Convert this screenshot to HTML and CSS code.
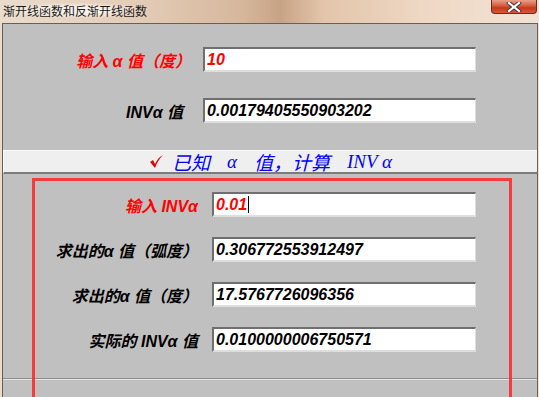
FILE: index.html
```html
<!DOCTYPE html>
<html lang="zh-CN">
<head>
    <meta charset="UTF-8">
    <title>渐开线函数和反渐开线函数</title>
    <link rel="stylesheet" href="styles.css">
</head>
<body>
    <div class="window">
        <div class="titlebar">
            <span class="title">渐开线函数和反渐开线函数</span>
            <div class="close-btn">
                <svg width="16" height="10" viewBox="0 0 16 10">
                    <path d="M3 1 L13 9 M13 1 L3 9" stroke="#3a3a3a" stroke-width="4" stroke-linecap="square"/>
                    <path d="M3 1 L13 9 M13 1 L3 9" stroke="#fff" stroke-width="2.2" stroke-linecap="square"/>
                </svg>
            </div>
        </div>
        <div class="client">
            <div class="top-form">
                <div class="label red">输入 α 值（度）</div>
                <div class="field red">10</div>
                <div class="label short">INVα 值</div>
                <div class="field">0.00179405550903202</div>
            </div>
            <div class="band">
                <svg class="check" width="14" height="13" viewBox="0 0 14 13">
                    <path d="M1 7 L4 5 L6 9 C8 5 10 2 14 0 C11 3 8 7 6 13 Z" fill="#e00000"/>
                </svg>
                <span class="band-text">已知</span>
                <span class="band-text latin">α</span>
                <span class="band-text">值，计算</span>
                <span class="band-text latin">INV α</span>
            </div>
            <div class="lower">
                <div class="lower-form">
                    <div class="label red">输入 INVα</div>
                    <div class="field red">0.01<span class="caret"></span></div>
                    <div class="label">求出的α 值（弧度）</div>
                    <div class="field">0.306772553912497</div>
                    <div class="label">求出的α 值（度）</div>
                    <div class="field">17.5767726096356</div>
                    <div class="label">实际的 INVα 值</div>
                    <div class="field">0.0100000006750571</div>
                </div>
                <div class="highlight"></div>
            </div>
        </div>
    </div>
</body>
</html>
```

FILE: styles.css
```css
body {
    margin: 0;
    padding: 0;
    background: #d9bfa8;
    font-family: "Liberation Sans", "Noto Sans CJK SC", sans-serif;
}
.window {
    width: 539px;
    height: 397px;
    overflow: hidden;
    display: flex;
    flex-direction: column;
    background: linear-gradient(90deg, #eadccd 0%, #e4cdb8 25%, #d6b79c 45%, #c7a386 52%, #e3c5ab 60%, #efd9c6 80%, #f2e2d4 100%);
}
.titlebar {
    height: 23px;
    flex: none;
    display: flex;
    justify-content: space-between;
    align-items: flex-start;
}
.title {
    margin: 3px 0 0 3px;
    font-family: "Noto Sans CJK SC", sans-serif;
    font-size: 12px;
    line-height: 15px;
    color: #1a1a1a;
    background: radial-gradient(ellipse at center, rgba(255, 250, 244, 0.8) 30%, rgba(255, 250, 244, 0) 75%);
}
.close-btn {
    width: 46px;
    height: 14px;
    margin-right: 2px;
    box-sizing: border-box;
    border: 1px solid #6b2a1c;
    border-top: none;
    border-radius: 0 0 4px 4px;
    background: linear-gradient(180deg, #e8a08a 0%, #d65a3c 45%, #c33a1e 60%, #d8583a 100%);
    display: flex;
    justify-content: center;
    align-items: center;
}
.client {
    flex: 1;
    margin: 0 1px 0 2px;
    border: 1px solid #6e5e50;
    border-bottom: none;
    background: #c0c0c0;
    display: flex;
    flex-direction: column;
}
.top-form {
    display: grid;
    grid-template-columns: 188px 273px;
    column-gap: 12px;
    row-gap: 26px;
    padding: 23px 0 27px;
}
.lower-form {
    display: grid;
    grid-template-columns: 195px 264px;
    column-gap: 14px;
    row-gap: 20px;
    padding: 18px 0 26px;
}
.label {
    height: 25px;
    display: flex;
    align-items: center;
    justify-content: flex-end;
    font-size: 16px;
    font-weight: bold;
    font-style: italic;
    color: #000;
    white-space: nowrap;
}
.label.short {
    padding-right: 8px;
}
.field {
    height: 25px;
    box-sizing: border-box;
    background: #fff;
    border-top: 2px solid #6f6f6f;
    border-left: 2px solid #6f6f6f;
    border-right: 1px solid #dedede;
    border-bottom: 2px solid #dedede;
    padding-left: 2px;
    display: flex;
    align-items: center;
    font-size: 16px;
    font-weight: bold;
    font-style: italic;
    color: #000;
}
.red {
    color: #ff0000;
}
.caret {
    display: inline-block;
    width: 1px;
    height: 17px;
    margin-left: 1px;
    background: #000;
}
.band {
    height: 21px;
    border-top: 1px solid #fafafa;
    border-left: 1px solid #fafafa;
    border-bottom: 2px solid #7c7c7c;
    background: #efefef;
    display: flex;
    justify-content: center;
    align-items: center;
    gap: 17px;
}
.band .check {
    margin-right: -8px;
}
.band-text {
    font-family: "Noto Sans CJK SC", sans-serif;
    font-style: italic;
    font-size: 19px;
    line-height: 21px;
    color: #0000ff;
}
.band-text.latin {
    font-family: "Liberation Serif", serif;
}
.lower {
    position: relative;
    flex: 1;
}
.lower-form {
    border-bottom: 1px solid #8e8e8e;
    box-shadow: 0 1px 0 #e4e4e4;
}
.highlight {
    position: absolute;
    left: 29px;
    top: 4px;
    width: 480px;
    height: 260px;
    box-sizing: border-box;
    border: 3px solid #f43c3c;
}
```
